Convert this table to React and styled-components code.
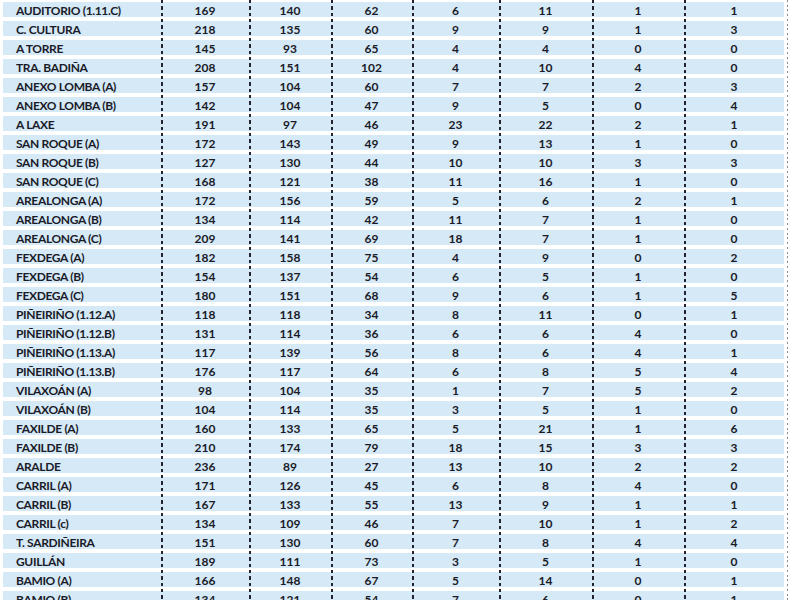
import React from "react";
import styled, { createGlobalStyle } from "styled-components";

const Global = createGlobalStyle`
  html, body { margin: 0; padding: 0; background: #ffffff; }
  body { overflow: hidden; }
`;

const BLUE = "#d5e9f7";
const DASH = "#23232f";

const rows = [
  ["AUDITORIO (1.11.C)", 169, 140, 62, 6, 11, 1, 1],
  ["C. CULTURA", 218, 135, 60, 9, 9, 1, 3],
  ["A TORRE", 145, 93, 65, 4, 4, 0, 0],
  ["TRA. BADIÑA", 208, 151, 102, 4, 10, 4, 0],
  ["ANEXO LOMBA (A)", 157, 104, 60, 7, 7, 2, 3],
  ["ANEXO LOMBA (B)", 142, 104, 47, 9, 5, 0, 4],
  ["A LAXE", 191, 97, 46, 23, 22, 2, 1],
  ["SAN ROQUE (A)", 172, 143, 49, 9, 13, 1, 0],
  ["SAN ROQUE (B)", 127, 130, 44, 10, 10, 3, 3],
  ["SAN ROQUE (C)", 168, 121, 38, 11, 16, 1, 0],
  ["AREALONGA (A)", 172, 156, 59, 5, 6, 2, 1],
  ["AREALONGA (B)", 134, 114, 42, 11, 7, 1, 0],
  ["AREALONGA (C)", 209, 141, 69, 18, 7, 1, 0],
  ["FEXDEGA (A)", 182, 158, 75, 4, 9, 0, 2],
  ["FEXDEGA (B)", 154, 137, 54, 6, 5, 1, 0],
  ["FEXDEGA (C)", 180, 151, 68, 9, 6, 1, 5],
  ["PIÑEIRIÑO (1.12.A)", 118, 118, 34, 8, 11, 0, 1],
  ["PIÑEIRIÑO (1.12.B)", 131, 114, 36, 6, 6, 4, 0],
  ["PIÑEIRIÑO (1.13.A)", 117, 139, 56, 8, 6, 4, 1],
  ["PIÑEIRIÑO (1.13.B)", 176, 117, 64, 6, 8, 5, 4],
  ["VILAXOÁN (A)", 98, 104, 35, 1, 7, 5, 2],
  ["VILAXOÁN (B)", 104, 114, 35, 3, 5, 1, 0],
  ["FAXILDE (A)", 160, 133, 65, 5, 21, 1, 6],
  ["FAXILDE (B)", 210, 174, 79, 18, 15, 3, 3],
  ["ARALDE", 236, 89, 27, 13, 10, 2, 2],
  ["CARRIL (A)", 171, 126, 45, 6, 8, 4, 0],
  ["CARRIL (B)", 167, 133, 55, 13, 9, 1, 1],
  ["CARRIL (c)", 134, 109, 46, 7, 10, 1, 2],
  ["T. SARDIÑEIRA", 151, 130, 60, 7, 8, 4, 4],
  ["GUILLÁN", 189, 111, 73, 3, 5, 1, 0],
  ["BAMIO (A)", 166, 148, 67, 5, 14, 0, 1],
  ["BAMIO (B)", 134, 121, 54, 7, 6, 0, 1],
];

const Table = styled.div`
  display: flex;
  flex-direction: column;
  margin-left: 3px;
  width: 787px;
  font-family: "Lato", "Open Sans", sans-serif;
  font-weight: 700;
  font-size: 12px;
  color: #1b1b28;
`;

const Row = styled.div`
  display: grid;
  grid-template-columns: 158px 88px 82px 81px 87px 93px 92px 100px 4px;
  height: 19px;
`;

const Cell = styled.div`
  height: 19px;
  box-sizing: border-box;
  padding-top: 2px;
  display: flex;
  align-items: center;
  justify-content: ${(p) => (p.$name ? "flex-start" : "center")};
  padding-left: ${(p) => (p.$name ? "13px" : "0")};
  line-height: 15px;
  white-space: nowrap;
  letter-spacing: ${(p) => (p.$name ? "-0.35px" : "0")};
  background:
    ${(p) =>
      p.$name
        ? ""
        : `repeating-linear-gradient(to bottom, ${DASH} 0 3.4px, transparent 3.4px 6.333px) left top / 2px 100% no-repeat,`}
    linear-gradient(${BLUE}, ${BLUE}) left 2px / 100% 15px no-repeat;
  & > span {
    display: block;
    height: 15px;
  }
`;

const Edge = styled.div`
  height: 19px;
  background: repeating-linear-gradient(
      to bottom,
      #8a8a96 0 2px,
      transparent 2px 4.75px
    )
    right top / 1.5px 100% no-repeat;
`;

export default function App() {
  return (
    <>
      <Global />
      <Table>
        {rows.map((r, i) => (
          <Row key={i}>
            <Cell $name>
              <span>{r[0]}</span>
            </Cell>
            {r.slice(1).map((v, j) => (
              <Cell key={j}>
                <span>{v}</span>
              </Cell>
            ))}
            <Edge />
          </Row>
        ))}
      </Table>
    </>
  );
}
